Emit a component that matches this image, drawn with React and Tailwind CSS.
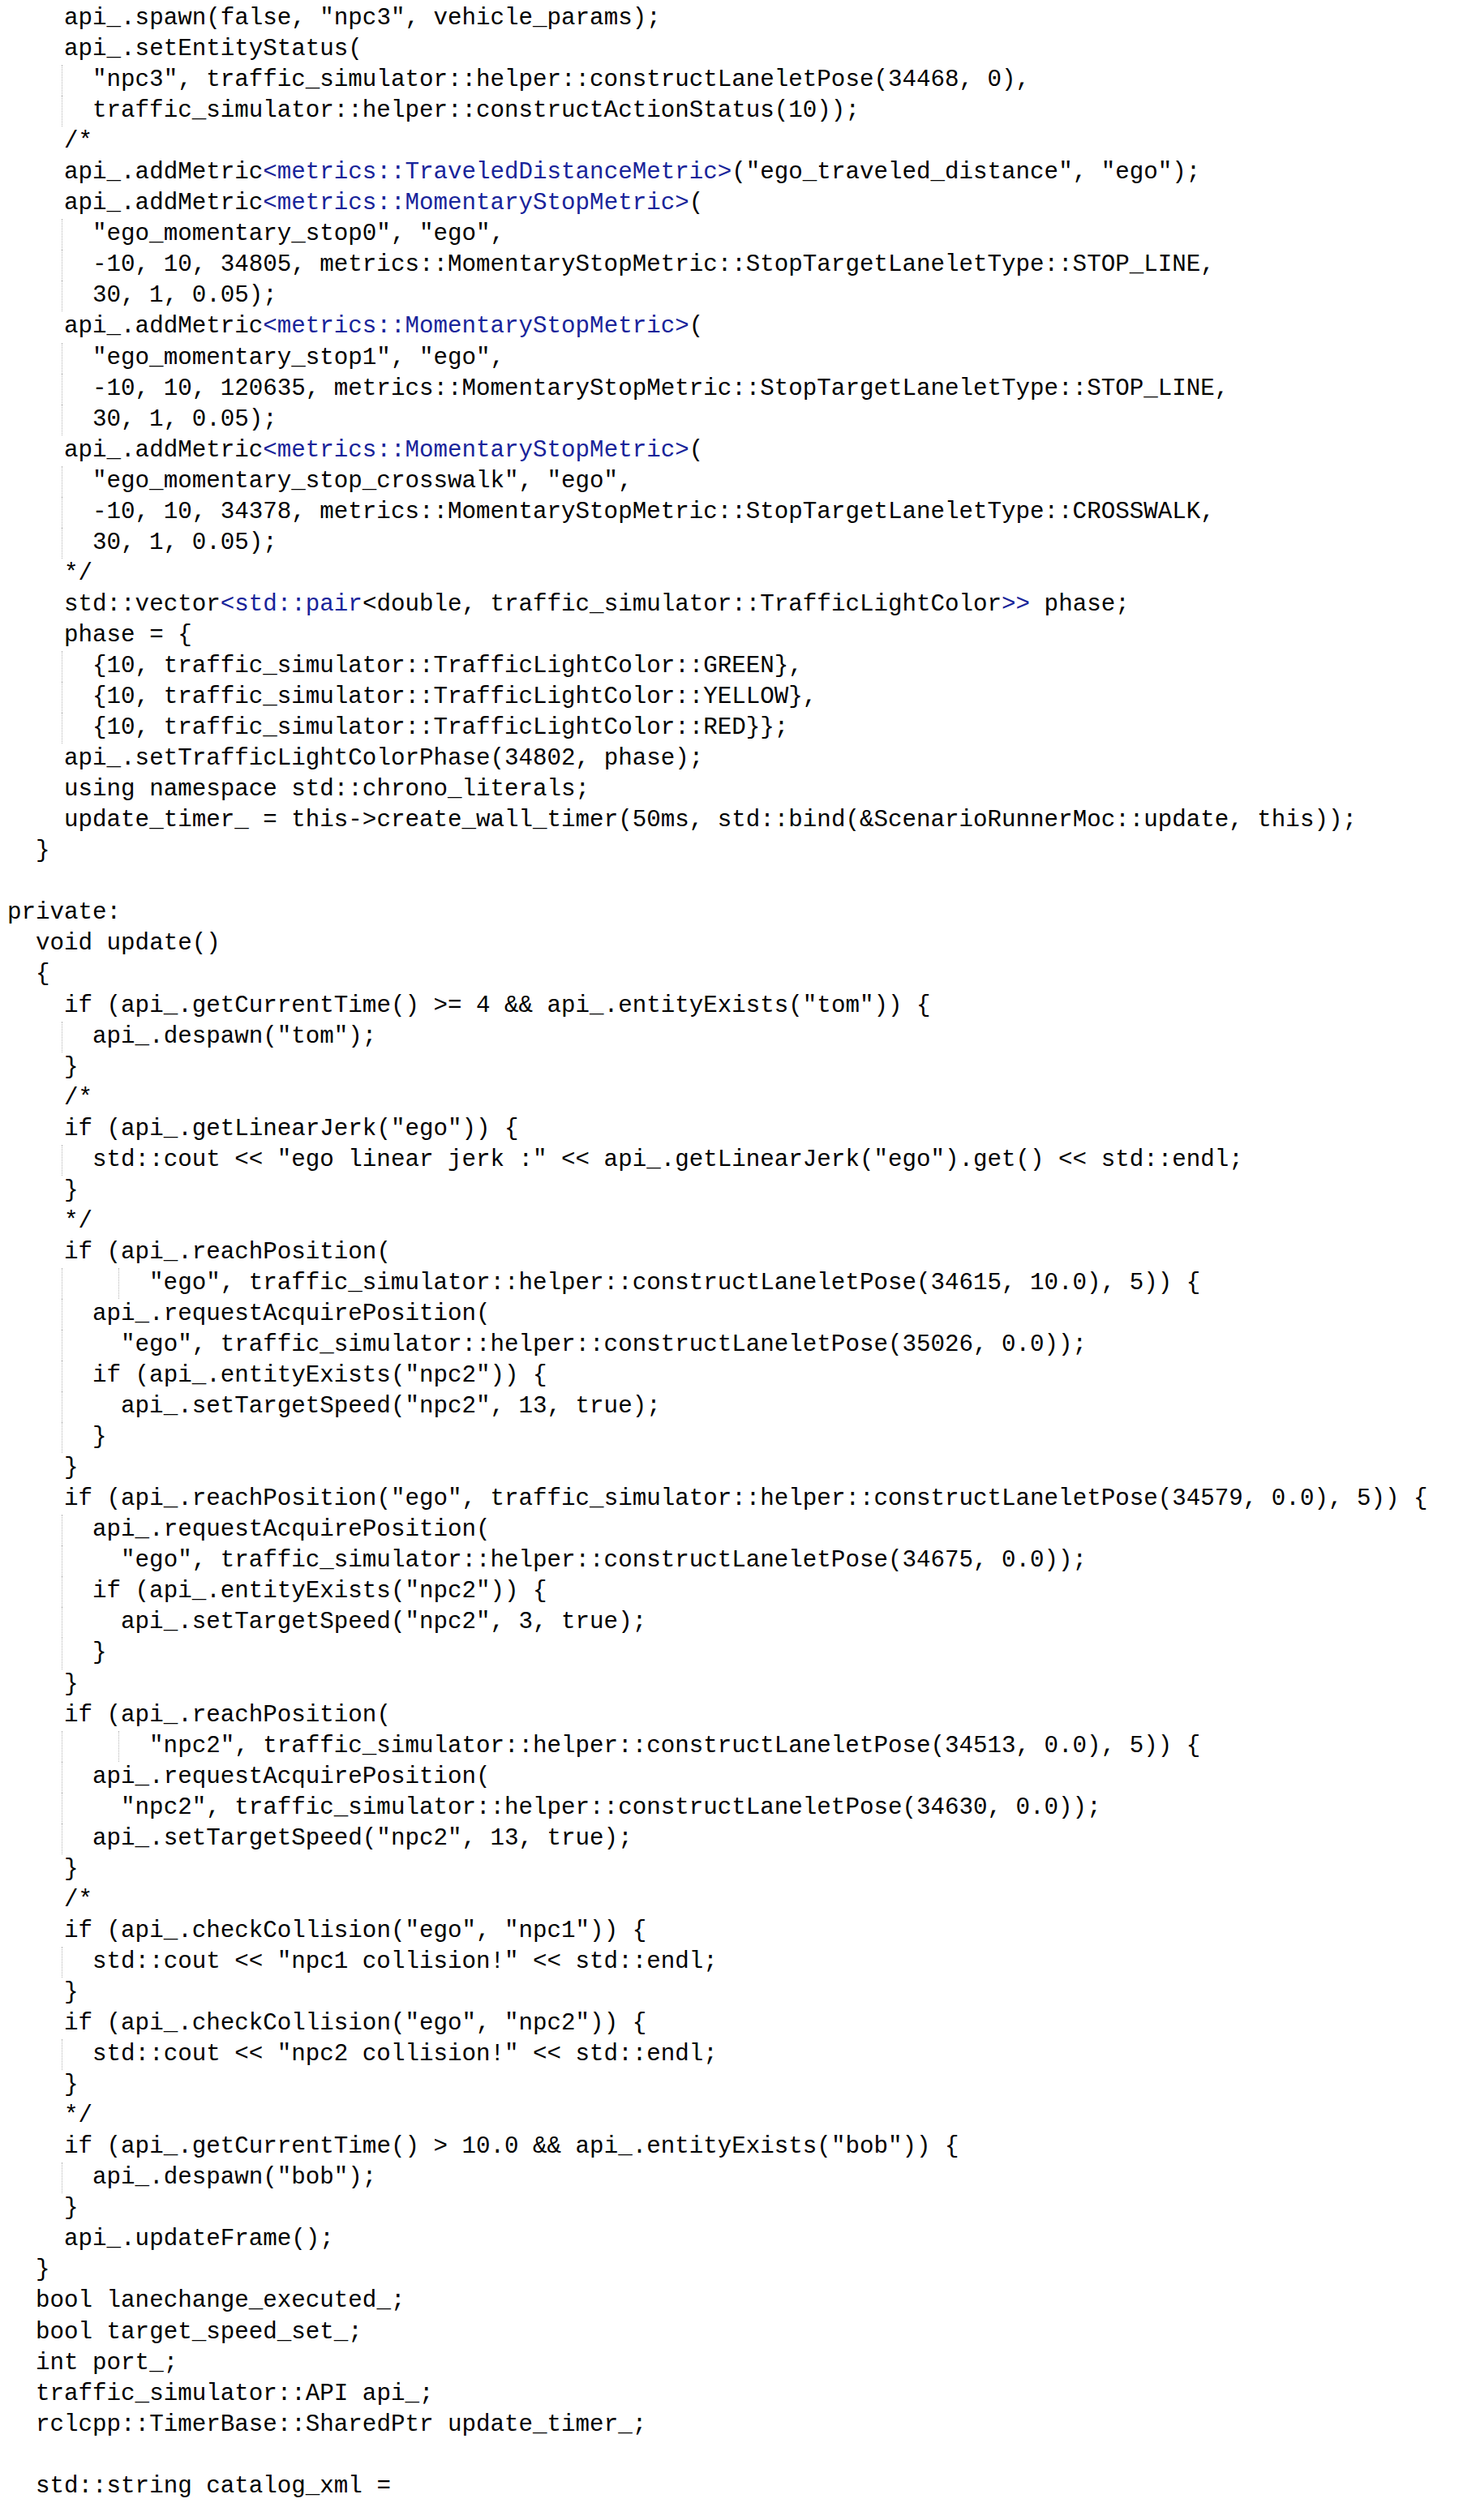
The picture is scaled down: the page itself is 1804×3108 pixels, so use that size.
import React from 'react';

// [indent, ...parts]; a part wrapped in an array is drawn blue
const lines = [
  [4, 'api_.spawn(false, "npc3", vehicle_params);'],
  [4, 'api_.setEntityStatus('],
  [6, '"npc3", traffic_simulator::helper::constructLaneletPose(34468, 0),'],
  [6, 'traffic_simulator::helper::constructActionStatus(10));'],
  [4, '/*'],
  [4, 'api_.addMetric', ['<metrics::TraveledDistanceMetric>'], '("ego_traveled_distance", "ego");'],
  [4, 'api_.addMetric', ['<metrics::MomentaryStopMetric>'], '('],
  [6, '"ego_momentary_stop0", "ego",'],
  [6, '-10, 10, 34805, metrics::MomentaryStopMetric::StopTargetLaneletType::STOP_LINE,'],
  [6, '30, 1, 0.05);'],
  [4, 'api_.addMetric', ['<metrics::MomentaryStopMetric>'], '('],
  [6, '"ego_momentary_stop1", "ego",'],
  [6, '-10, 10, 120635, metrics::MomentaryStopMetric::StopTargetLaneletType::STOP_LINE,'],
  [6, '30, 1, 0.05);'],
  [4, 'api_.addMetric', ['<metrics::MomentaryStopMetric>'], '('],
  [6, '"ego_momentary_stop_crosswalk", "ego",'],
  [6, '-10, 10, 34378, metrics::MomentaryStopMetric::StopTargetLaneletType::CROSSWALK,'],
  [6, '30, 1, 0.05);'],
  [4, '*/'],
  [4, 'std::vector', ['<std::pair'], '<double, traffic_simulator::TrafficLightColor', ['>>'], ' phase;'],
  [4, 'phase = {'],
  [6, '{10, traffic_simulator::TrafficLightColor::GREEN},'],
  [6, '{10, traffic_simulator::TrafficLightColor::YELLOW},'],
  [6, '{10, traffic_simulator::TrafficLightColor::RED}};'],
  [4, 'api_.setTrafficLightColorPhase(34802, phase);'],
  [4, 'using namespace std::chrono_literals;'],
  [4, 'update_timer_ = this->create_wall_timer(50ms, std::bind(&ScenarioRunnerMoc::update, this));'],
  [2, '}'],
  [0, ''],
  [0, 'private:'],
  [2, 'void update()'],
  [2, '{'],
  [4, 'if (api_.getCurrentTime() >= 4 && api_.entityExists("tom")) {'],
  [6, 'api_.despawn("tom");'],
  [4, '}'],
  [4, '/*'],
  [4, 'if (api_.getLinearJerk("ego")) {'],
  [6, 'std::cout << "ego linear jerk :" << api_.getLinearJerk("ego").get() << std::endl;'],
  [4, '}'],
  [4, '*/'],
  [4, 'if (api_.reachPosition('],
  [10, '"ego", traffic_simulator::helper::constructLaneletPose(34615, 10.0), 5)) {'],
  [6, 'api_.requestAcquirePosition('],
  [8, '"ego", traffic_simulator::helper::constructLaneletPose(35026, 0.0));'],
  [6, 'if (api_.entityExists("npc2")) {'],
  [8, 'api_.setTargetSpeed("npc2", 13, true);'],
  [6, '}'],
  [4, '}'],
  [4, 'if (api_.reachPosition("ego", traffic_simulator::helper::constructLaneletPose(34579, 0.0), 5)) {'],
  [6, 'api_.requestAcquirePosition('],
  [8, '"ego", traffic_simulator::helper::constructLaneletPose(34675, 0.0));'],
  [6, 'if (api_.entityExists("npc2")) {'],
  [8, 'api_.setTargetSpeed("npc2", 3, true);'],
  [6, '}'],
  [4, '}'],
  [4, 'if (api_.reachPosition('],
  [10, '"npc2", traffic_simulator::helper::constructLaneletPose(34513, 0.0), 5)) {'],
  [6, 'api_.requestAcquirePosition('],
  [8, '"npc2", traffic_simulator::helper::constructLaneletPose(34630, 0.0));'],
  [6, 'api_.setTargetSpeed("npc2", 13, true);'],
  [4, '}'],
  [4, '/*'],
  [4, 'if (api_.checkCollision("ego", "npc1")) {'],
  [6, 'std::cout << "npc1 collision!" << std::endl;'],
  [4, '}'],
  [4, 'if (api_.checkCollision("ego", "npc2")) {'],
  [6, 'std::cout << "npc2 collision!" << std::endl;'],
  [4, '}'],
  [4, '*/'],
  [4, 'if (api_.getCurrentTime() > 10.0 && api_.entityExists("bob")) {'],
  [6, 'api_.despawn("bob");'],
  [4, '}'],
  [4, 'api_.updateFrame();'],
  [2, '}'],
  [2, 'bool lanechange_executed_;'],
  [2, 'bool target_speed_set_;'],
  [2, 'int port_;'],
  [2, 'traffic_simulator::API api_;'],
  [2, 'rclcpp::TimerBase::SharedPtr update_timer_;'],
  [0, ''],
  [2, 'std::string catalog_xml ='],
];

const chunkWidth = { 1: 'w-[1ch]', 2: 'w-[2ch]', 3: 'w-[3ch]', 4: 'w-[4ch]' };

function CodeLine({ indent, parts }) {
  // first tab stop is plain whitespace, deeper ones carry a dotted guide
  const guides = [];
  for (let c = 4; c < indent; c += 4) {
    guides.push(Math.min(4, indent - c));
  }
  return (
    <div className="flex h-[38.05px] whitespace-pre leading-[38px]">
      <span className={`shrink-0 ${chunkWidth[Math.min(indent, 4)] || ''}`} />
      {guides.map((w, i) => (
        <span key={i} className={`relative shrink-0 ${chunkWidth[w]}`}>
          <span className="absolute -left-[3px] top-0 bottom-0 border-l border-dotted border-[#b4b4b4]" />
        </span>
      ))}
      <span>
        {parts.map((p, i) =>
          Array.isArray(p) ? (
            <span key={i} className="text-[#18249a]">{p[0]}</span>
          ) : (
            <span key={i}>{p}</span>
          )
        )}
      </span>
    </div>
  );
}

export default function App() {
  return (
    <div className="min-h-screen bg-white pl-[9px] pt-[4px] font-['Liberation_Mono',monospace] text-[29.2px] text-black">
      {lines.map(([indent, ...parts], idx) => (
        <CodeLine key={idx} indent={indent} parts={parts} />
      ))}
    </div>
  );
}
